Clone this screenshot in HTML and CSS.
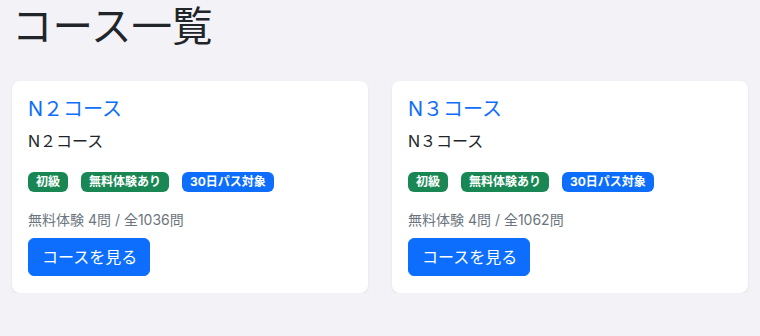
FILE: index.html
```html
<!DOCTYPE html>
<html lang="ja">
<head>
    <meta charset="UTF-8">
    <meta name="viewport" content="width=device-width, initial-scale=1.0">
    <title>コース一覧</title>
    <link rel="stylesheet" href="styles.css">
</head>
<body>
    <div class="container">
        <h1 class="page-title">コース一覧</h1>
        <div class="course-list">
            <div class="course-card">
                <h2 class="course-title">N２コース</h2>
                <p class="course-desc">N２コース</p>
                <div class="badges">
                    <span class="badge badge-green">初級</span>
                    <span class="badge badge-green">無料体験あり</span>
                    <span class="badge badge-blue">30日パス対象</span>
                </div>
                <p class="course-stats">無料体験 4問 / 全1036問</p>
                <a href="#n2" class="btn">コースを見る</a>
            </div>
            <div class="course-card">
                <h2 class="course-title">N３コース</h2>
                <p class="course-desc">N３コース</p>
                <div class="badges">
                    <span class="badge badge-green">初級</span>
                    <span class="badge badge-green">無料体験あり</span>
                    <span class="badge badge-blue">30日パス対象</span>
                </div>
                <p class="course-stats">無料体験 4問 / 全1062問</p>
                <a href="#n3" class="btn">コースを見る</a>
            </div>
        </div>
    </div>
</body>
</html>
```

FILE: styles.css
```css
body {
    font-family: Inter, "Noto Sans CJK JP", sans-serif;
    margin: 0;
    padding: 0;
    background-color: #f2f2f7;
    color: #212529;
}
.container {
    padding: 0 12px;
}
.page-title {
    font-size: 40.5px;
    font-weight: 400;
    line-height: 1.2;
    margin: 0;
    padding-top: 3px;
}
.course-list {
    display: grid;
    grid-template-columns: 1fr 1fr;
    gap: 24px;
    margin-top: 29px;
}
.course-card {
    background: #ffffff;
    border-radius: 8px;
    box-shadow: 0 1px 3px rgba(0, 0, 0, 0.08);
    padding: 16px 16px 17px;
}
.course-title {
    color: #0d6efd;
    font-size: 20px;
    font-weight: 400;
    line-height: 1.2;
    margin: 0 0 8px;
}
.course-desc {
    font-size: 16px;
    line-height: 1.5;
    margin: 0 0 19px;
}
.badges {
    display: flex;
    gap: 13px;
    margin-bottom: 17px;
}
.badge {
    color: #ffffff;
    font-size: 12px;
    font-weight: 700;
    line-height: 1;
    padding: 4px 8px;
    border-radius: 6px;
}
.badge-green {
    background: #198754;
}
.badge-blue {
    background: #0d6efd;
}
.course-stats {
    color: #6c757d;
    font-size: 14px;
    line-height: 1.5;
    margin: 0 0 8px;
}
.btn {
    display: inline-block;
    background: #0d6efd;
    color: #ffffff;
    font-size: 16px;
    line-height: 1.5;
    padding: 6px 12px 6px 13px;
    border: 1px solid #0d6efd;
    border-radius: 6px;
    text-decoration: none;
}
```
